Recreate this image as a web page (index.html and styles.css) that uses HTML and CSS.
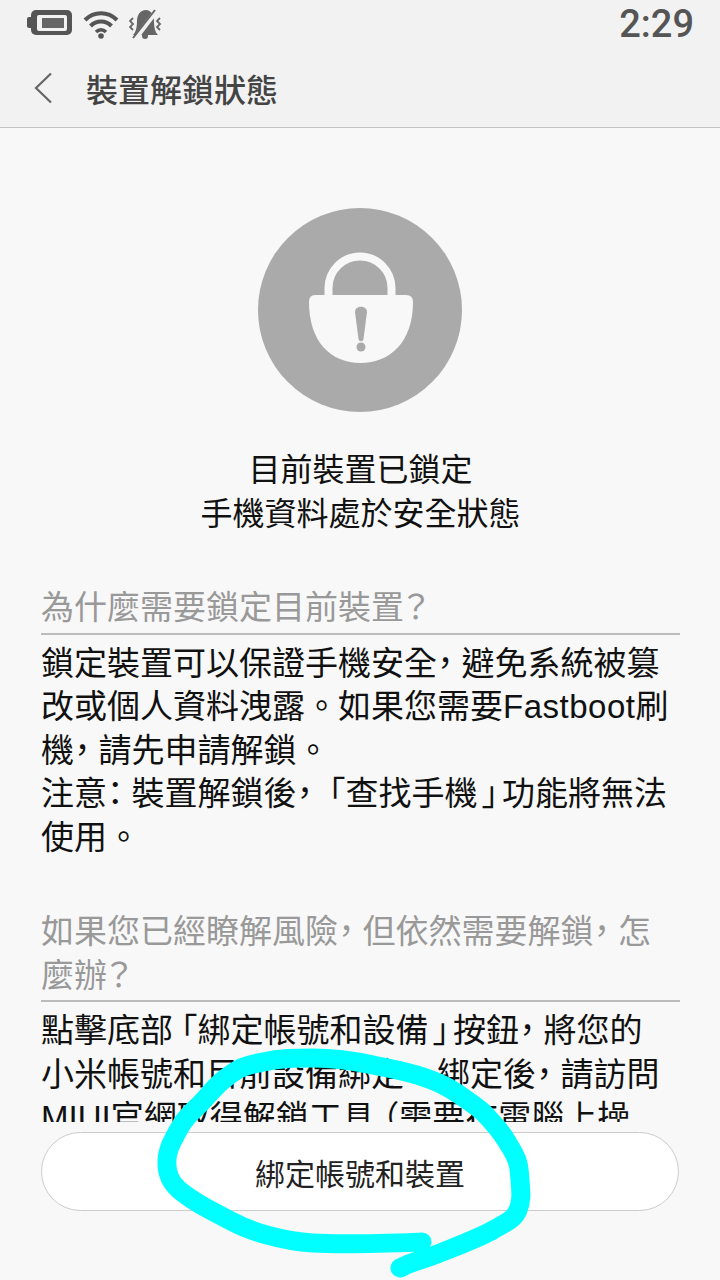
FILE: index.html
```html
<!DOCTYPE html>
<html lang="zh-Hant">
<head>
    <meta charset="UTF-8">
    <meta name="viewport" content="width=device-width, initial-scale=1.0">
    <title>裝置解鎖狀態</title>
    <link rel="stylesheet" href="styles.css">
</head>
<body>

    <div class="phone">
        <div class="top">
            <div class="status">
                <div class="status-icons">
                    <svg class="ic-battery" width="46" height="28" viewBox="0 0 46 28">
                        <rect x="0" y="7" width="6" height="11" rx="2" fill="#555"/>
                        <rect x="4" y="0" width="41" height="25" rx="5" fill="#555"/>
                        <rect x="10" y="5" width="30" height="16" rx="2" fill="#f1f2f1"/>
                        <rect x="15" y="8" width="22" height="10" fill="#666"/>
                    </svg>
                    <svg class="ic-wifi" width="36" height="30" viewBox="0 0 36 30">
                        <path d="M2 11C11 2 25 2 34 11" fill="none" stroke="#555" stroke-width="4"/>
                        <path d="M7.500 17C13.500 11 22.500 11 28.500 17" fill="none" stroke="#555" stroke-width="4"/>
                        <path d="M13 23C16 20 20 20 23 23" fill="none" stroke="#555" stroke-width="3.500"/>
                        <circle cx="18" cy="27" r="2.800" fill="#555"/>
                    </svg>
                    <svg class="ic-mute" width="34" height="30" viewBox="0 0 34 30">
                        <path d="M17 1C11 1 8 6 8 12C8 18 7 23 4 26H29C26 23 25 18 25 12C25 6 22 1 17 1Z" fill="#666"/>
                        <circle cx="16" cy="27" r="3" fill="#666"/>
                        <path d="M28 1L6 30" fill="none" stroke="#f1f2f1" stroke-width="5"/>
                        <path d="M26 1L4 29" fill="none" stroke="#666" stroke-width="2"/>
                        <path d="M4 9L1 12L4 15L1 18L4 21M31 9L28 12L31 15L28 18L31 21" fill="none" stroke="#666" stroke-width="1.800"/>
                    </svg>
                </div>
                <div class="clock">2:29</div>
            </div>
            <div class="header">
                <svg class="back" width="20" height="32" viewBox="0 0 20 32">
                    <path d="M18 1.500L3 16L18 30.500" fill="none" stroke="#666" stroke-width="2.200"/>
                </svg>
                <h1>裝置解鎖狀態</h1>
            </div>
        </div>

        <div class="content">
            <svg class="lock" width="204" height="204" viewBox="0 0 204 204">
                <circle cx="102" cy="102" r="102" fill="#aaaaaa"/>
                <path d="M70.500 90V80A31.500 31.500 0 0 1 133.500 80V90" fill="none" stroke="#f8f8f8" stroke-width="8"/>
                <path d="M57 87H148Q155 87 155 94C155 134 132 155 102.500 155C73 155 51 134 51 94Q51 87 57 87Z" fill="#f8f8f8"/>
                <path d="M97 104C97 97 109 97 109 104L105.500 131C105 134 101 134 100.500 131Z" fill="#aaaaaa"/>
                <circle cx="103" cy="139" r="4.500" fill="#aaaaaa"/>
            </svg>
            <p class="state">目前裝置已鎖定<br>手機資料處於安全狀態</p>

            <h2 class="sec-title">為什麼需要鎖定目前裝置<span class="q">&#xFF1F;</span></h2>
            <p class="sec-text">鎖定裝置可以保證手機安全<span class="pn">&#xFF0C;</span>避免系統被篡改或個人資料洩露。如果您需要<span class="latin">Fastboot</span>刷機<span class="pn">&#xFF0C;</span>請先申請解鎖。<br>注意<span class="pn">&#xFF1A;</span>裝置解鎖後<span class="pn">&#xFF0C;</span><span class="open">「</span>查找手機<span class="close">」</span>功能將無法使用。</p>

            <h2 class="sec-title second">如果您已經瞭解風險<span class="pn">&#xFF0C;</span>但依然需要解鎖<span class="pn">&#xFF0C;</span>怎麼辦<span class="q">&#xFF1F;</span></h2>
            <p class="sec-text">點擊底部<span class="open">「</span>綁定帳號和設備<span class="close">」</span>按鈕<span class="pn">&#xFF0C;</span>將您的<br>小米帳號和目前設備綁定。綁定後<span class="pn">&#xFF0C;</span>請訪問MIUI官網取得解鎖工具<span class="open">&#xFF08;</span>需要在電腦上操<br>作<span class="close">&#xFF09;</span>。</p>
        </div>

        <div class="bottom">
            <button class="bind-btn">綁定帳號和裝置</button>
        </div>

        <svg class="scribble" width="720" height="1280" viewBox="0 0 720 1280">
            <path d="M422 1242C395 1243 345 1245 313 1243S250 1231 233 1222S205 1208 193 1200S174 1187 170 1178S165 1155 173 1140S183 1120 197 1107S212 1088 227 1077S245 1066 263 1062S295 1058 313 1058S350 1060 373 1065S405 1071 423 1077S450 1088 467 1100S483 1112 493 1123S505 1138 512 1150S519 1167 520 1180S522 1200 518 1210S505 1223 493 1230S465 1243 440 1253S415 1260 400 1268" fill="none" stroke="#00ffff" stroke-width="19" stroke-linecap="round" stroke-linejoin="round"/>
        </svg>
    </div>

</body>
</html>
```

FILE: styles.css
```css
html, body {
    margin: 0;
    padding: 0;
}
body {
    font-family: "Liberation Sans", "Noto Sans CJK TC", sans-serif;
    background-color: #f8f8f8;
    color: #111;
}
.phone {
    position: relative;
    width: 720px;
    height: 1280px;
    overflow: hidden;
    display: flex;
    flex-direction: column;
}
.top {
    background-color: #f1f2f1;
    border-bottom: 1px solid #c4c4c4;
    box-sizing: border-box;
    flex: none;
    height: 128px;
}
.status {
    display: flex;
    justify-content: space-between;
    align-items: center;
    height: 48px;
    padding: 0 26px 0 27px;
}
.status-icons {
    display: flex;
    align-items: center;
    gap: 10px;
}
.clock {
    font-family: Roboto, sans-serif;
    font-size: 38px;
    font-weight: 500;
    color: #555;
}
.header {
    display: flex;
    align-items: center;
    height: 79px;
    padding-left: 33px;
}
.header h1 {
    margin: 0 0 0 33px;
    font-size: 32px;
    font-weight: 500;
    color: #444;
}
.content {
    flex: 1;
    min-height: 0;
    overflow: hidden;
    padding: 80px 40px 0 41px;
}
.lock {
    display: block;
    margin-left: 217px;
}
.state {
    margin: 36px 0 0;
    text-align: center;
    font-size: 32px;
    line-height: 44px;
}
.sec-title {
    margin: 50px 0 0;
    padding-bottom: 3px;
    border-bottom: 2px solid #bbb;
    font-size: 33px;
    line-height: 43.5px;
    font-weight: 400;
    color: #999;
}
.sec-title.second {
    margin-top: 51px;
}
.sec-text {
    margin: 7px 0 0;
    font-size: 33px;
    line-height: 43.5px;
}
/* narrow punctuation, the phone font sets these under a full em */
.pn, .open, .close {
    font-family: "Noto Sans CJK SC", sans-serif;
    font-feature-settings: "halt";
    line-height: 1;
}
.pn {
    padding-right: 8px;
}
.open {
    padding-left: 8px;
}
.close {
    padding: 0 4px;
}
.latin {
    letter-spacing: 0.5px;
}
.q {
    font-family: "Noto Sans CJK SC", sans-serif;
    font-feature-settings: "palt";
    line-height: 1;
}
.bottom {
    flex: none;
    height: 158px;
    padding: 10px 41px 0;
    box-sizing: border-box;
}
.bind-btn {
    display: block;
    width: 100%;
    height: 79px;
    background-color: #fff;
    border: 1px solid #ccc;
    border-radius: 40px;
    font-family: inherit;
    font-size: 30px;
    color: #222;
}
.scribble {
    position: absolute;
    left: 0;
    top: 0;
}
```
